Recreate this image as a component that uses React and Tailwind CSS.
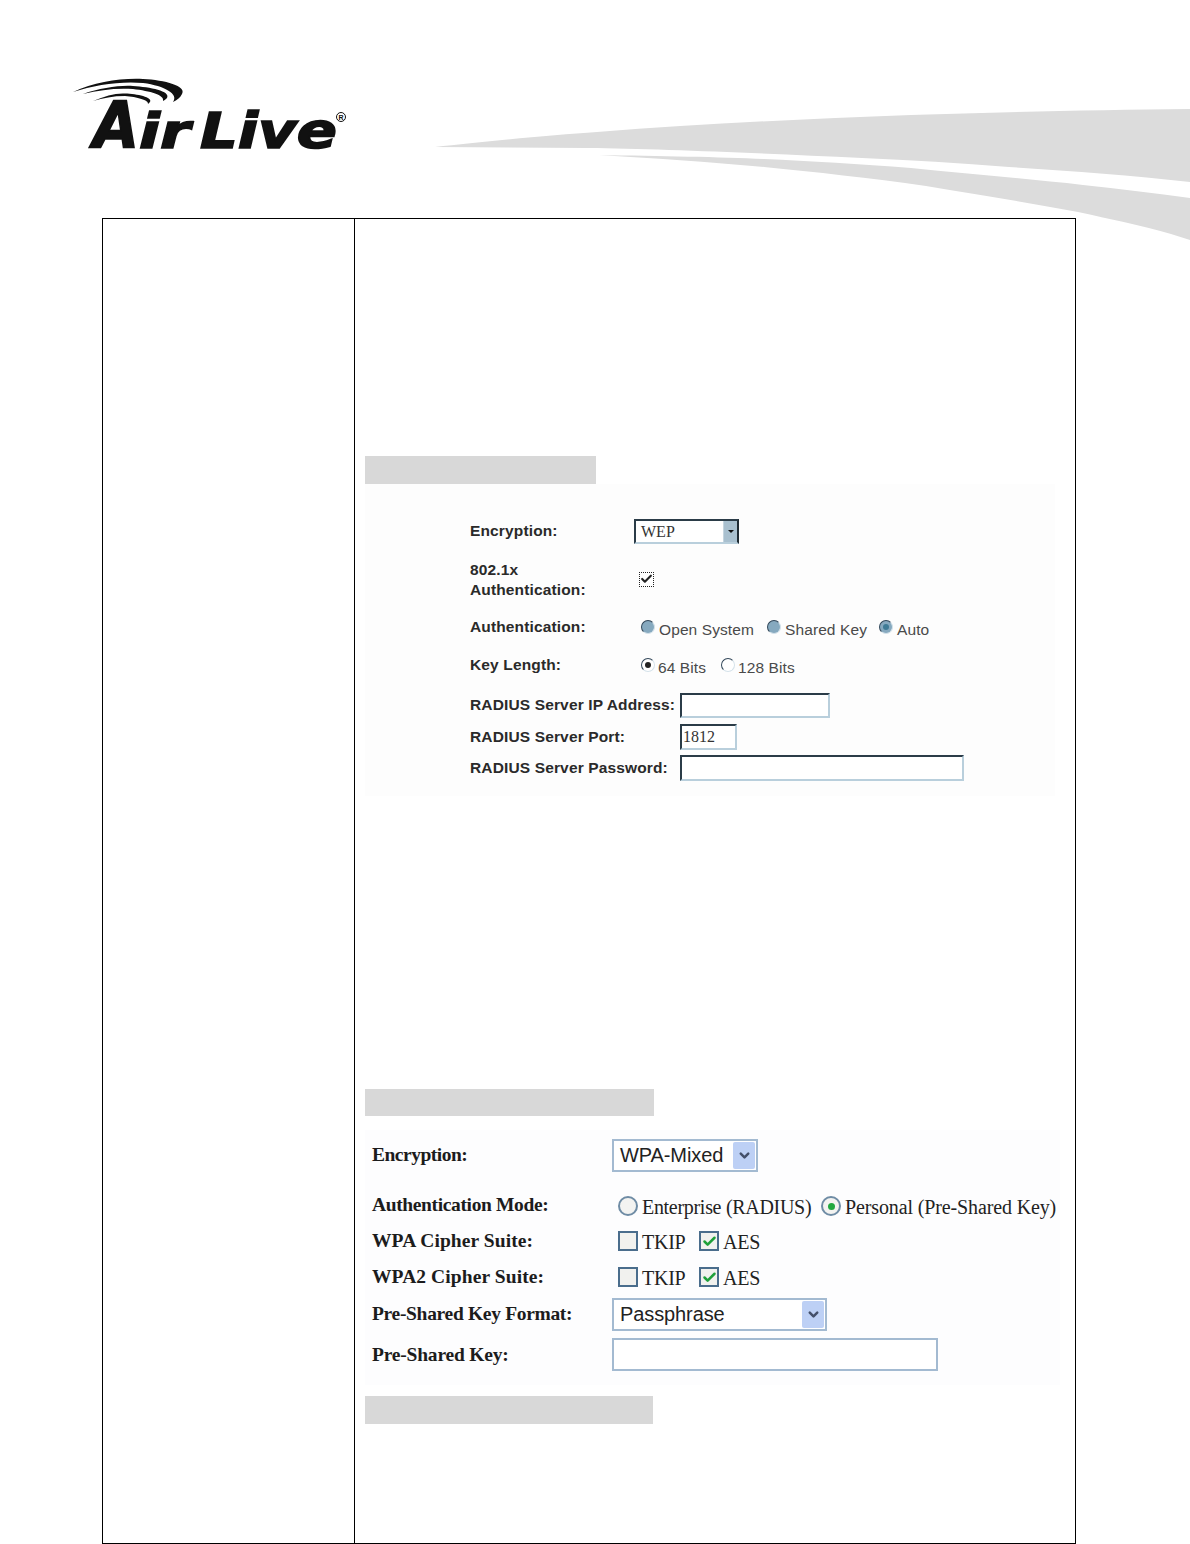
import { Check, ChevronDown } from "lucide-react";

const sans = "font-['Liberation_Sans',Arial,sans-serif]";
const serif = "font-['Liberation_Serif','Times_New_Roman',serif]";

function Logo() {
  return (
    <svg width="290" height="90" viewBox="0 0 290 90" className="absolute left-[65px] top-[70px] overflow-visible">
      <g fill="#111">
        <path d="M8 22 C30 12 55 8 78 9 C100 10 122 16 117 24 C115 28 112 30 108 32 C114 24 100 16 78 13 C55 11 30 15 8 22 Z" />
        <path d="M18 24 C35 18 55 15 68 16 C85 17 106 21 102 28 C101 29 100 30 98 31 C100 25 85 21 68 19 C50 18 35 20 18 24 Z" />
        <path d="M28 31 C40 26 50 23 60 23.5 C72 24 88 27 85 32 L83 34 C84 30 72 27 60 26 C48 26 38 28 28 31 Z" />
      </g>
      <g fontFamily="'DejaVu Sans',sans-serif" fontWeight="700" fontStyle="italic" fill="#111" stroke="#111" strokeWidth="1.6">
        <text x="28" y="78" fontSize="64" textLength="46" lengthAdjust="spacingAndGlyphs">A</text>
        <text x="74" y="78" fontSize="48" textLength="51" lengthAdjust="spacingAndGlyphs">ir</text>
        <text x="135" y="78" fontSize="49" textLength="137" lengthAdjust="spacingAndGlyphs">Live</text>
      </g>
      <circle cx="276" cy="47" r="4.5" fill="none" stroke="#111" strokeWidth="1" />
      <text x="273.6" y="50" fontSize="7" fontWeight="700" fontFamily="'Liberation Sans',sans-serif" fill="#111">R</text>
    </svg>
  );
}

function Swoosh() {
  return (
    <svg width="755" height="135" viewBox="435 107 755 135" className="absolute left-[435px] top-[107px]">
      <path fill="#dcdcdc" d="M435 147 C480 142 550 135 597 132 C700 124 800 119 911 115 C1000 112 1100 110 1190 109 L1190 182 C1130 175 1070 171 1009 167 C960 163 910 160 862 158 C760 153 660 149 587 148 Z" />
      <path fill="#dcdcdc" d="M599 155 C660 156 720 157 764 159 C810 161 860 164 911 168 C970 174 1030 179 1083 185 C1120 189 1155 193 1190 198 L1190 240 L1171 234 C1140 225 1110 219 1078 212 C1030 203 980 195 926 186 C870 178 815 172 764 167 C710 162 650 158 599 155 Z" />
    </svg>
  );
}

function OldRadio({ on, fill }) {
  return (
    <span className={`flex h-[14px] w-[14px] shrink-0 items-center justify-center rounded-full border border-b-[#d5e2ea] border-l-[#33485a] border-r-[#d5e2ea] border-t-[#33485a] ${fill ? "bg-[#86a9bf]" : "bg-white"}`}>
      {on && <span className="h-[6px] w-[6px] rounded-full bg-[#222]" />}
      {fill === "auto" && <span className="h-[6px] w-[6px] rounded-full bg-[#3f7b96]" />}
    </span>
  );
}

function OldInput({ className, children }) {
  return (
    <div className={`flex h-full items-center border-2 border-b-[#b9cfdc] border-l-[#2b3c48] border-r-[#b9cfdc] border-t-[#2b3c48] bg-white pl-[1px] ${className}`}>
      {children}
    </div>
  );
}

function WepForm() {
  const label = "relative text-[15.5px] font-bold leading-[20px] tracking-[0.14px] text-[#2a2a2a]";
  const val = "text-[15.5px] leading-[20px] tracking-[0.1px] text-[#4a4a4a] relative top-[3px]";
  return (
    <div className={`${sans} h-[312px] w-[690px] bg-[#fdfdfd] pl-[105px] pt-[34px]`}>
      <div className="flex h-[27px] items-center">
        <span className={`${label} top-[-1px] w-[164px]`}>Encryption:</span>
        <div className="flex h-[25px] w-[105px] items-center border-2 border-b-[#b9cfdc] border-l-[#2b3c48] border-r-[#1f2b33] border-t-[#2b3c48] bg-white">
          <span className={`${serif} flex-1 pl-[5px] text-[16px] leading-none text-[#333]`}>WEP</span>
          <span className="flex h-full w-[14px] items-center justify-center border-l border-[#c5d5df] bg-[#a9c0cf]">
            <span className="h-0 w-0 border-x-[3px] border-t-[3px] border-x-transparent border-t-[#111]" />
          </span>
        </div>
      </div>
      <div className="mt-[15px] flex h-[40px] items-center">
        <span className={`${label} w-[169px]`}>802.1x<br />Authentication:</span>
        <span className="relative top-[-1px] flex h-[15px] w-[15px] items-center justify-center border border-dotted border-[#222] bg-white">
          <Check size={14} strokeWidth={4} className="text-[#222]" />
        </span>
      </div>
      <div className="mt-[14px] flex h-[25px] items-center">
        <span className={`${label} w-[171px]`}>Authentication:</span>
        <OldRadio fill="plain" />
        <span className={`${val} ml-[4px] w-[108px]`}>Open System</span>
        <OldRadio fill="plain" />
        <span className={`${val} ml-[4px] w-[94px]`}>Shared Key</span>
        <OldRadio fill="auto" />
        <span className={`${val} ml-[4px]`}>Auto</span>
      </div>
      <div className="mt-[13px] flex h-[26px] items-center">
        <span className={`${label} w-[171px]`}>Key Length:</span>
        <OldRadio on />
        <span className={`${val} ml-[3px] w-[63px]`}>64 Bits</span>
        <OldRadio />
        <span className={`${val} ml-[3px]`}>128 Bits</span>
      </div>
      <div className="mt-[15px] flex h-[25px] items-center">
        <span className={`${label} top-[-1px] w-[210px] whitespace-nowrap`}>RADIUS Server IP Address:</span>
        <OldInput className="w-[150px]" />
      </div>
      <div className="mt-[6px] flex h-[26px] items-center">
        <span className={`${label} w-[210px]`}>RADIUS Server Port:</span>
        <OldInput className="w-[57px]">
          <span className={`${serif} text-[16px] leading-none text-[#333]`}>1812</span>
        </OldInput>
      </div>
      <div className="mt-[5px] flex h-[26px] items-center">
        <span className={`${label} w-[210px]`}>RADIUS Server Password:</span>
        <OldInput className="w-[284px]" />
      </div>
    </div>
  );
}

function VistaSelect({ text, className }) {
  return (
    <div className={`flex h-[33px] items-center border-2 border-[#a3bad1] bg-white pl-[6px] pr-[1px] ${sans} ${className}`}>
      <span className="relative top-[-1px] flex-1 text-[20px] leading-none tracking-[-0.1px] text-[#222]">{text}</span>
      <span className="flex h-[27px] w-[22px] items-center justify-center rounded-[2px] bg-[#bdd0f5]">
        <ChevronDown size={15} strokeWidth={4} className="text-[#44506a]" />
      </span>
    </div>
  );
}

function VistaCheck({ on }) {
  return (
    <span className="flex h-[20px] w-[20px] shrink-0 items-center justify-center border-2 border-[#4a6d8c] bg-[#f1f1ee]">
      {on && <Check size={15} strokeWidth={4} className="text-[#1fa03a]" />}
    </span>
  );
}

function VistaRadio({ on }) {
  return (
    <span className="flex h-[20px] w-[20px] shrink-0 items-center justify-center rounded-full border-2 border-[#6f8ca5] bg-[#f3f3f1]">
      {on && <span className="h-[7px] w-[7px] rounded-full bg-[#22a83f]" />}
    </span>
  );
}

function WpaForm() {
  const label = "relative w-[240px] whitespace-nowrap text-[19.5px] font-bold leading-none text-[#1c1c1c]";
  const val = "relative top-[1px] text-[20px] leading-none text-[#222] whitespace-nowrap";
  return (
    <div className={`${serif} mt-[14px] h-[255px] w-[695px] bg-[#fdfdfe] pl-[7px] pt-[9px]`}>
      <div className="flex h-[33px] items-center">
        <span className={`${label} top-[-1px] tracking-[-0.5px]`}>Encryption:</span>
        <VistaSelect text="WPA-Mixed" className="w-[146px]" />
      </div>
      <div className="mt-[23px] flex h-[22px] items-center">
        <span className={`${label} top-[-1px] tracking-[-0.36px]`}>Authentication Mode:</span>
        <span className="ml-[6px]"><VistaRadio /></span>
        <span className={`${val} ml-[4px] w-[179px] tracking-[-0.3px]`}>Enterprise (RADIUS)</span>
        <VistaRadio on />
        <span className={`${val} ml-[4px] tracking-[-0.13px]`}>Personal (Pre-Shared Key)</span>
      </div>
      <div className="mt-[13px] flex h-[22px] items-center">
        <span className={`${label} tracking-[0.09px]`}>WPA Cipher Suite:</span>
        <span className="ml-[6px]"><VistaCheck /></span>
        <span className={`${val} ml-[4px] w-[57px] tracking-[-0.25px]`}>TKIP</span>
        <VistaCheck on />
        <span className={`${val} ml-[4px] tracking-[-0.25px]`}>AES</span>
      </div>
      <div className="mt-[14px] flex h-[22px] items-center">
        <span className={`${label} tracking-[0.09px]`}>WPA2 Cipher Suite:</span>
        <span className="ml-[6px]"><VistaCheck /></span>
        <span className={`${val} ml-[4px] w-[57px] tracking-[-0.25px]`}>TKIP</span>
        <VistaCheck on />
        <span className={`${val} ml-[4px] tracking-[-0.25px]`}>AES</span>
      </div>
      <div className="mt-[10px] flex h-[33px] items-center">
        <span className={`${label} top-[-1px] tracking-[-0.32px]`}>Pre-Shared Key Format:</span>
        <VistaSelect text="Passphrase" className="w-[215px]" />
      </div>
      <div className="mt-[7px] flex h-[33px] items-center">
        <span className={`${label} tracking-[-0.2px]`}>Pre-Shared Key:</span>
        <div className="h-[33px] w-[326px] border-2 border-[#a3bad1] bg-white" />
      </div>
    </div>
  );
}

export default function App() {
  return (
    <div className="relative h-[1544px] w-[1190px] overflow-hidden bg-white">
      <Swoosh />
      <Logo />
      <div className="relative ml-[102px] mt-[218px] flex h-[1326px] w-[974px] border border-black">
        <div className="w-[252px] shrink-0 border-r border-black" />
        <div className="flex-1 pl-[10px] pt-[237px]">
          <div className="h-[28px] w-[231px] bg-[#d8d8d8]" />
          <WepForm />
          <div className="mt-[293px] h-[27px] w-[289px] bg-[#d8d8d8]" />
          <WpaForm />
          <div className="mt-[11px] h-[28px] w-[288px] bg-[#d8d8d8]" />
        </div>
      </div>
    </div>
  );
}
